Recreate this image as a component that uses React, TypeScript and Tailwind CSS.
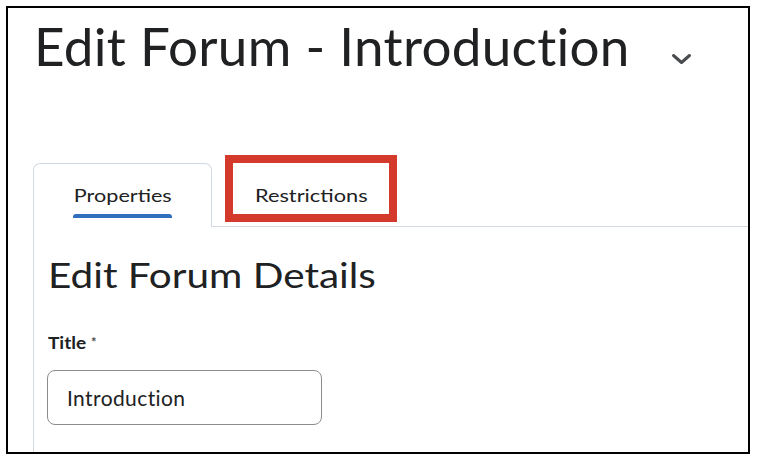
import React from "react";

export default function App() {
  return (
    <div className="w-[758px] h-[464px] bg-white overflow-hidden" style={{ fontFamily: "Lato, 'Noto Sans', sans-serif" }}>
      <div className="ml-[6px] mt-[6px] w-[744px] h-[448px] border-2 border-black overflow-hidden flex flex-col">
        <div className="flex items-start pl-[26px] pt-[6px] h-[70px] shrink-0">
          <h1 className="text-[53px] leading-[64px] text-[#202122] font-normal tracking-[0.3px] whitespace-nowrap">Edit Forum - Introduction</h1>
          <svg className="ml-[41px] mt-[39px] shrink-0" width="21" height="12" viewBox="0 0 21 12">
            <path d="M2.5 2.5 L10.5 9.5 L18.5 2.5" stroke="#494c4e" strokeWidth="3" fill="none" strokeLinecap="round" strokeLinejoin="round" />
          </svg>
        </div>
        <div className="mt-[85px] flex items-end shrink-0">
          <div className="w-[25px] shrink-0" />
          <div className="w-[179px] h-[64px] shrink-0 border border-b-0 border-[#d3d9e3] rounded-t-[7px] flex flex-col items-center pt-[20px]">
            <span className="inline-block text-[18px] leading-[22px] text-[#202122] scale-x-[1.2] origin-center">Properties</span>
            <div className="mt-[8px] w-[99px] h-[4px] rounded-t-[3px] bg-[#2f6fbd]" />
          </div>
          <div className="flex-1 border-b border-[#d3d9e3] h-[64px] relative">
            <div className="absolute left-[13px] top-[-8px] w-[172px] h-[67px] border-[8px] border-[#d33a2c]" />
            <div className="pl-[43px] pt-[21px]">
              <span className="inline-block text-[18px] leading-[22px] text-[#202122] scale-x-[1.21] origin-left">Restrictions</span>
            </div>
          </div>
        </div>
        <div className="flex-1 ml-[25px] border-l border-[#d3d9e3] pl-[14px]">
          <h2 className="mt-[27px] text-[34px] leading-[41px] text-[#202122] font-normal whitespace-nowrap scale-x-[1.19] origin-left">Edit Forum Details</h2>
          <div className="mt-[38px] text-[17px] leading-[20px] font-bold text-[#202122] flex items-start">
            <span className="inline-block scale-x-[1.12] origin-left">Title</span>
            <span className="ml-[9px] mt-[3px] text-[13px] leading-[13px] font-bold text-[#494c4e]">*</span>
          </div>
          <div className="mt-[17px] ml-[-1px] w-[275px] h-[55px] border-[1.5px] border-[#8a8d8f] rounded-[8px] flex items-center pl-[19px] text-[21px] leading-[26px] text-[#202122] tracking-[0.4px]">Introduction</div>
        </div>
      </div>
    </div>
  );
}
